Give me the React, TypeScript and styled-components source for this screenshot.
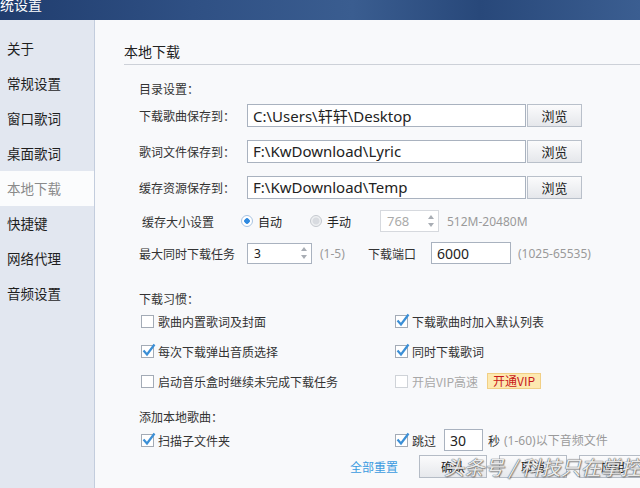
import React from 'react';
import styled, { createGlobalStyle } from 'styled-components';

const GlobalStyle = createGlobalStyle`
  html, body { margin: 0; padding: 0; }
  body { font-family: "Noto Sans CJK SC", "Noto Sans", sans-serif; }
`;

const Window = styled.div`
  width: 640px;
  height: 488px;
  overflow: hidden;
  display: flex;
  flex-direction: column;
  position: relative;
  background: #f8f9fb;
`;

const TitleBar = styled.div`
  height: 20px;
  flex-shrink: 0;
  overflow: hidden;
  background: linear-gradient(90deg, #203d6e 0%, #2f5084 30%, #3a5d90 55%, #28487a 75%, #3b5e91 100%);
`;

const TitleText = styled.div`
  color: #fff;
  font-size: 14px;
  line-height: 20px;
  margin: -6px 0 0 -14px;
`;

const Body = styled.div`
  flex: 1;
  display: flex;
  min-height: 0;
`;

const Sidebar = styled.div`
  width: 94px;
  flex-shrink: 0;
  background: #e2e7f0;
  border-right: 1px solid #c3cddd;
  padding-top: 11px;
`;

const NavItem = styled.div<{ $active?: boolean }>`
  height: 35px;
  line-height: 35px;
  padding-left: 7px;
  font-size: 13.5px;
  color: ${p => (p.$active ? '#8a8a8a' : '#1e1e1e')};
  background: ${p => (p.$active ? '#fbfcfd' : 'transparent')};
`;

const Main = styled.div`
  flex: 1;
  padding: 21px 0 0 29px;
  background: #f8f9fb;
`;

const PageTitle = styled.div`
  font-size: 14px;
  line-height: 20px;
  padding-bottom: 3px;
  border-bottom: 1px solid #cdd1d8;
  color: #222;
`;

const Content = styled.div`
  padding: 14px 0 0 15px;
`;

const Row = styled.div<{ $h: number; $mt?: number; $pl?: number }>`
  display: flex;
  align-items: center;
  height: ${p => p.$h}px;
  margin-top: ${p => p.$mt ?? 0}px;
  padding-left: ${p => p.$pl ?? 0}px;
  white-space: nowrap;
`;

const Label = styled.div<{ $w?: number; $pl?: number }>`
  width: ${p => (p.$w ? `${p.$w}px` : 'auto')};
  flex-shrink: 0;
  padding-left: ${p => p.$pl ?? 0}px;
  box-sizing: border-box;
  font-size: 12px;
  color: #333;
`;

const Hint = styled.div<{ $w?: number; $ml?: number }>`
  width: ${p => (p.$w ? `${p.$w}px` : 'auto')};
  margin-left: ${p => p.$ml ?? 0}px;
  flex-shrink: 0;
  font-family: "Noto Sans", "Noto Sans CJK SC", sans-serif;
  font-size: 12px;
  color: #9a9a9a;
`;

const TextBox = styled.input<{ $w: number; $h: number; $fs: number; $ml?: number }>`
  width: ${p => p.$w}px;
  height: ${p => p.$h}px;
  margin: 0 0 0 ${p => p.$ml ?? 0}px;
  box-sizing: border-box;
  border: 1px solid #a9b2bf;
  background: #fff;
  padding: 0 0 0 5px;
  font-family: "Noto Sans", "Noto Sans CJK SC", sans-serif;
  font-size: ${p => p.$fs}px;
  color: #222;
  outline: none;
  flex-shrink: 0;
`;

const BrowseButton = styled.button`
  margin-left: 1px;
  width: 55px;
  height: 23px;
  box-sizing: border-box;
  border: 1px solid #b9c0ca;
  background: linear-gradient(#fbfbfc, #e5e7eb);
  font-family: "Noto Sans CJK SC", sans-serif;
  font-size: 13px;
  color: #222;
  padding: 0;
`;

const RadioOption = styled.div<{ $w: number }>`
  width: ${p => p.$w}px;
  display: flex;
  align-items: center;
  gap: 5px;
  font-size: 12px;
  color: #222;
`;

const RadioDot = styled.span<{ $on?: boolean }>`
  width: 12px;
  height: 12px;
  box-sizing: border-box;
  border-radius: 50%;
  border: 1px solid ${p => (p.$on ? '#a9c4e2' : '#c4c8ce')};
  background: ${p =>
    p.$on
      ? 'radial-gradient(circle, #2f8ae0 0 2.5px, #fff 3px)'
      : 'radial-gradient(circle, #d8dbe0 0 3px, #eef0f2 4px)'};
  flex-shrink: 0;
`;

const Spin = styled.div<{ $w: number; $h: number; $disabled?: boolean; $ml?: number }>`
  width: ${p => p.$w}px;
  height: ${p => p.$h}px;
  margin-left: ${p => p.$ml ?? 0}px;
  box-sizing: border-box;
  border: 1px solid ${p => (p.$disabled ? '#d6d9de' : '#a9b2bf')};
  background: #fff;
  display: flex;
  align-items: center;
  justify-content: space-between;
  padding: 0 3px 0 6px;
  font-family: "Noto Sans", sans-serif;
  font-size: ${p => (p.$disabled ? 13 : 12)}px;
  color: ${p => (p.$disabled ? '#aaa' : '#222')};
  flex-shrink: 0;
`;

const SpinArrows = () => (
  <svg width="8" height="16" viewBox="0 0 8 16">
    <path d="M4 2 L7 6 H1 Z" fill="#a8adb4" />
    <path d="M4 14 L7 10 H1 Z" fill="#a8adb4" />
  </svg>
);

const CheckItem = styled.div<{ $w?: number; $muted?: boolean }>`
  width: ${p => (p.$w ? `${p.$w}px` : 'auto')};
  flex-shrink: 0;
  display: flex;
  align-items: center;
  gap: 4px;
  font-size: 12px;
  color: ${p => (p.$muted ? '#a8a8a8' : '#333')};
`;

const Box = styled.span<{ $muted?: boolean }>`
  width: 13px;
  height: 13px;
  box-sizing: border-box;
  border: 1px solid ${p => (p.$muted ? '#cfd3d8' : '#a3abb6')};
  background: #fff;
  position: relative;
  flex-shrink: 0;
  svg { position: absolute; left: 0; top: -3px; overflow: visible; }
`;

const Check = ({ on, muted }: { on?: boolean; muted?: boolean }) => (
  <Box $muted={muted}>
    {on && (
      <svg width="14" height="14" viewBox="0 0 14 14">
        <path d="M1.5 7.5 L5 11.5 L12.5 1.5" fill="none" stroke="#3b8fd6" strokeWidth="2.2" />
      </svg>
    )}
  </Box>
);

const VipBadge = styled.span`
  margin-left: 9px;
  height: 14px;
  line-height: 14px;
  padding: 0 5px;
  background: #fde9b0;
  border: 1px solid #f1cf85;
  color: #c8181b;
  font-size: 12px;
`;

const ResetLink = styled.span`
  font-size: 12px;
  color: #3b9be0;
  margin-right: 21px;
`;

const ActionButton = styled.button`
  width: 68px;
  height: 23px;
  margin-right: 12px;
  flex-shrink: 0;
  box-sizing: border-box;
  border: 1px solid #b5bcc6;
  background: linear-gradient(#fbfbfc, #e6e8ec);
  font-family: "Noto Sans CJK SC", sans-serif;
  font-size: 12px;
  color: #222;
  padding: 0;
`;

const Watermark = styled.div`
  position: absolute;
  left: 444px;
  top: 452px;
  font-size: 20px;
  font-style: italic;
  color: rgba(255, 255, 255, 0.9);
  text-shadow: 0 0 1px #555, 0 0 1px #555, 1px 1px 1px rgba(0, 0, 0, 0.35);
  white-space: nowrap;
  pointer-events: none;
`;

const navItems = ['关于', '常规设置', '窗口歌词', '桌面歌词', '本地下载', '快捷键', '网络代理', '音频设置'];

const paths = [
  { label: '下载歌曲保存到：', value: 'C:\\Users\\轩轩\\Desktop' },
  { label: '歌词文件保存到：', value: 'F:\\KwDownload\\Lyric' },
  { label: '缓存资源保存到：', value: 'F:\\KwDownload\\Temp' },
];

export default function App() {
  return (
    <>
      <GlobalStyle />
      <Window>
        <TitleBar>
          <TitleText>系统设置</TitleText>
        </TitleBar>
        <Body>
          <Sidebar>
            {navItems.map(n => (
              <NavItem key={n} $active={n === '本地下载'}>{n}</NavItem>
            ))}
          </Sidebar>
          <Main>
            <PageTitle>本地下载</PageTitle>
            <Content>
              <Row $h={18}>
                <Label>目录设置：</Label>
              </Row>
              {paths.map(p => (
                <Row key={p.label} $h={36}>
                  <Label $w={108}>{p.label}</Label>
                  <TextBox $w={279} $h={23} $fs={15} readOnly defaultValue={p.value} />
                  <BrowseButton>浏览</BrowseButton>
                </Row>
              ))}
              <Row $h={32}>
                <Label $w={102} $pl={3}>缓存大小设置</Label>
                <RadioOption $w={69}><RadioDot $on />自动</RadioOption>
                <RadioOption $w={70}><RadioDot />手动</RadioOption>
                <Spin $w={59} $h={22} $disabled>768<SpinArrows /></Spin>
                <Hint $ml={8}>512M-20480M</Hint>
              </Row>
              <Row $h={32}>
                <Label $w={108}>最大同时下载任务</Label>
                <Spin $w={65} $h={21}>3<SpinArrows /></Spin>
                <Hint $ml={8} $w={48}>(1-5)</Hint>
                <Label $w={63}>下载端口</Label>
                <TextBox $w={80} $h={22} $fs={14} readOnly defaultValue="6000" />
                <Hint $ml={7}>(1025-65535)</Hint>
              </Row>
              <Row $h={16} $mt={21}>
                <Label>下载习惯：</Label>
              </Row>
              <Row $h={30} $pl={2}>
                <CheckItem $w={254}><Check />歌曲内置歌词及封面</CheckItem>
                <CheckItem><Check on />下载歌曲时加入默认列表</CheckItem>
              </Row>
              <Row $h={30} $pl={2}>
                <CheckItem $w={254}><Check on />每次下载弹出音质选择</CheckItem>
                <CheckItem><Check on />同时下载歌词</CheckItem>
              </Row>
              <Row $h={30} $pl={2}>
                <CheckItem $w={254}><Check />启动音乐盒时继续未完成下载任务</CheckItem>
                <CheckItem $muted><Check muted />开启VIP高速</CheckItem>
                <VipBadge>开通VIP</VipBadge>
              </Row>
              <Row $h={24} $mt={8}>
                <Label>添加本地歌曲：</Label>
              </Row>
              <Row $h={24} $pl={2}>
                <CheckItem $w={254}><Check on />扫描子文件夹</CheckItem>
                <CheckItem $w={49}><Check on />跳过</CheckItem>
                <TextBox $w={39} $h={22} $fs={14} readOnly defaultValue="30" />
                <Label $w={21} $pl={5}>秒</Label>
                <Hint>(1-60)以下音频文件</Hint>
              </Row>
              <Row $h={29} $pl={211}>
                <ResetLink>全部重置</ResetLink>
                <ActionButton>确认</ActionButton>
                <ActionButton>取消</ActionButton>
                <ActionButton>应用</ActionButton>
              </Row>
            </Content>
          </Main>
        </Body>
        <Watermark>头条号 / 科技只在掌控</Watermark>
      </Window>
    </>
  );
}
